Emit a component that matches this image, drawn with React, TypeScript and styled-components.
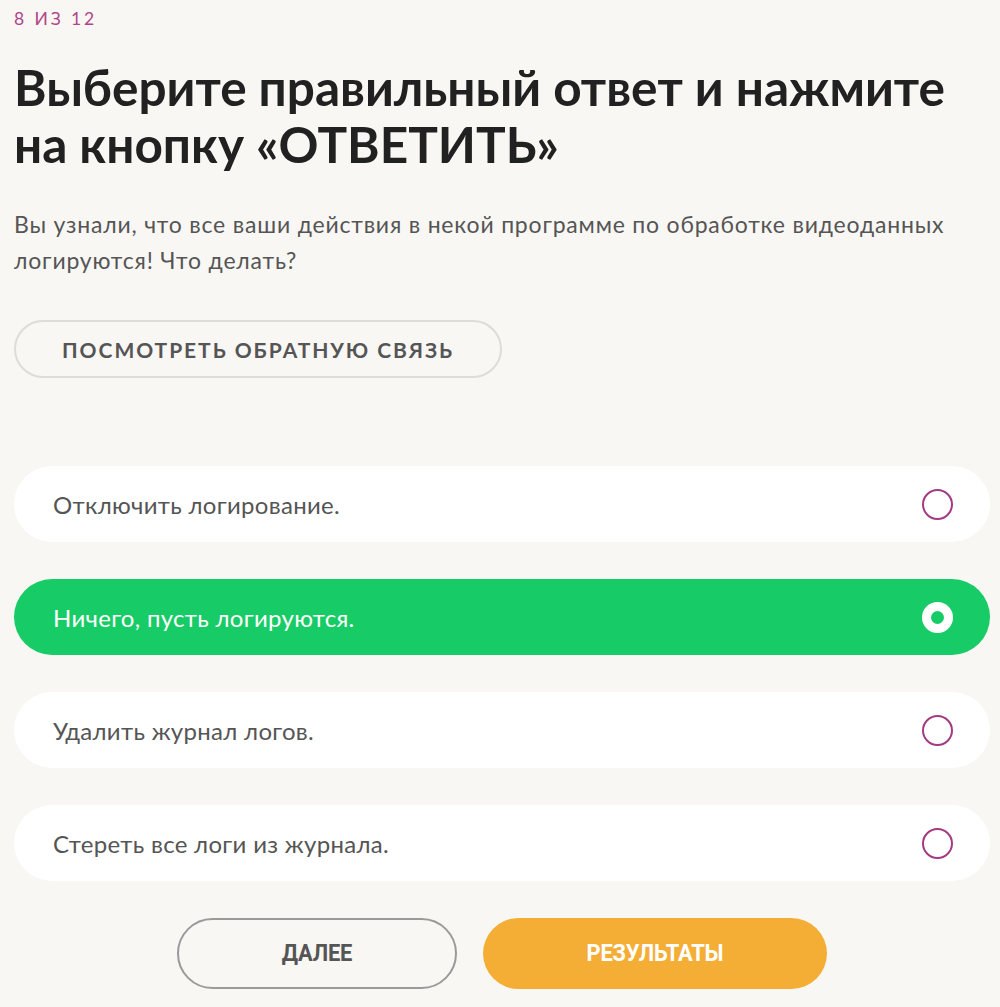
import styled, { createGlobalStyle } from 'styled-components'

const GlobalStyle = createGlobalStyle`
  html, body {
    margin: 0;
    padding: 0;
    background: #f8f7f4;
  }
  body {
    font-family: Lato, "Open Sans", sans-serif;
  }
  * {
    box-sizing: border-box;
  }
`

const Page = styled.div`
  display: flex;
  flex-direction: column;
  padding: 8px 10px 0 14px;
`

const Counter = styled.div`
  font-size: 17.5px;
  letter-spacing: 2.9px;
  color: #b0468a;
  line-height: 22px;
`

const Title = styled.h1`
  margin: 29px 0 0;
  font-size: 49.5px;
  font-weight: 700;
  line-height: 57px;
  color: #212121;
`

const Question = styled.p`
  margin: 33px 0 0;
  max-width: 960px;
  font-size: 23px;
  letter-spacing: 0.8px;
  line-height: 36px;
  color: #555;
`

const FeedbackButton = styled.button`
  align-self: flex-start;
  margin-top: 42px;
  width: 488px;
  height: 58px;
  border: 2px solid #dedcd8;
  border-radius: 30px;
  background: transparent;
  font-family: Lato, sans-serif;
  font-weight: 700;
  font-size: 21px;
  letter-spacing: 1.95px;
  color: #555;
  text-transform: uppercase;
`

const Options = styled.div`
  display: flex;
  flex-direction: column;
  gap: 37px;
  margin-top: 88px;
`

const Option = styled.div<{ $selected?: boolean }>`
  display: flex;
  align-items: center;
  justify-content: space-between;
  height: 76px;
  padding: 0 37px 0 39px;
  border-radius: 38px;
  background: ${(p) => (p.$selected ? '#17cc66' : '#ffffff')};
  color: ${(p) => (p.$selected ? '#ffffff' : '#555')};
  font-size: 24px;
  letter-spacing: 0.3px;
`

const Radio = styled.span<{ $selected?: boolean }>`
  flex: none;
  width: 31px;
  height: 31px;
  border-radius: 50%;
  border: ${(p) => (p.$selected ? '9px solid #ffffff' : '2px solid #a33a82')};
  background: ${(p) => (p.$selected ? '#17cc66' : 'transparent')};
`

const Actions = styled.div`
  display: flex;
  justify-content: center;
  gap: 26px;
  margin-top: 37px;
`

const ActionButton = styled.button<{ $primary?: boolean }>`
  height: 71px;
  width: ${(p) => (p.$primary ? '344px' : '280px')};
  border-radius: 36px;
  border: ${(p) => (p.$primary ? 'none' : '2px solid #9a9a9a')};
  background: ${(p) => (p.$primary ? '#f4ae35' : 'transparent')};
  color: ${(p) => (p.$primary ? '#ffffff' : '#555')};
  font-family: Roboto, "Liberation Sans", sans-serif;
  font-weight: 700;
  font-size: 23px;
  letter-spacing: -0.2px;
  text-transform: uppercase;

  span {
    display: inline-block;
    transform: scaleX(0.95);
  }
`

const answers = [
  'Отключить логирование.',
  'Ничего, пусть логируются.',
  'Удалить журнал логов.',
  'Стереть все логи из журнала.',
]

export default function App() {
  const selected = 1

  return (
    <>
      <GlobalStyle />
      <Page>
        <Counter>8 ИЗ 12</Counter>
        <Title>
          Выберите правильный ответ и нажмите
          <br />
          на кнопку «ОТВЕТИТЬ»
        </Title>
        <Question>
          Вы узнали, что все ваши действия в некой программе по обработке видеоданных
          логируются! Что делать?
        </Question>
        <FeedbackButton>Посмотреть обратную связь</FeedbackButton>

        <Options>
          {answers.map((answer, i) => (
            <Option key={answer} $selected={i === selected}>
              <span>{answer}</span>
              <Radio $selected={i === selected} />
            </Option>
          ))}
        </Options>

        <Actions>
          <ActionButton>
            <span>Далее</span>
          </ActionButton>
          <ActionButton $primary>
            <span>Результаты</span>
          </ActionButton>
        </Actions>
      </Page>
    </>
  )
}
